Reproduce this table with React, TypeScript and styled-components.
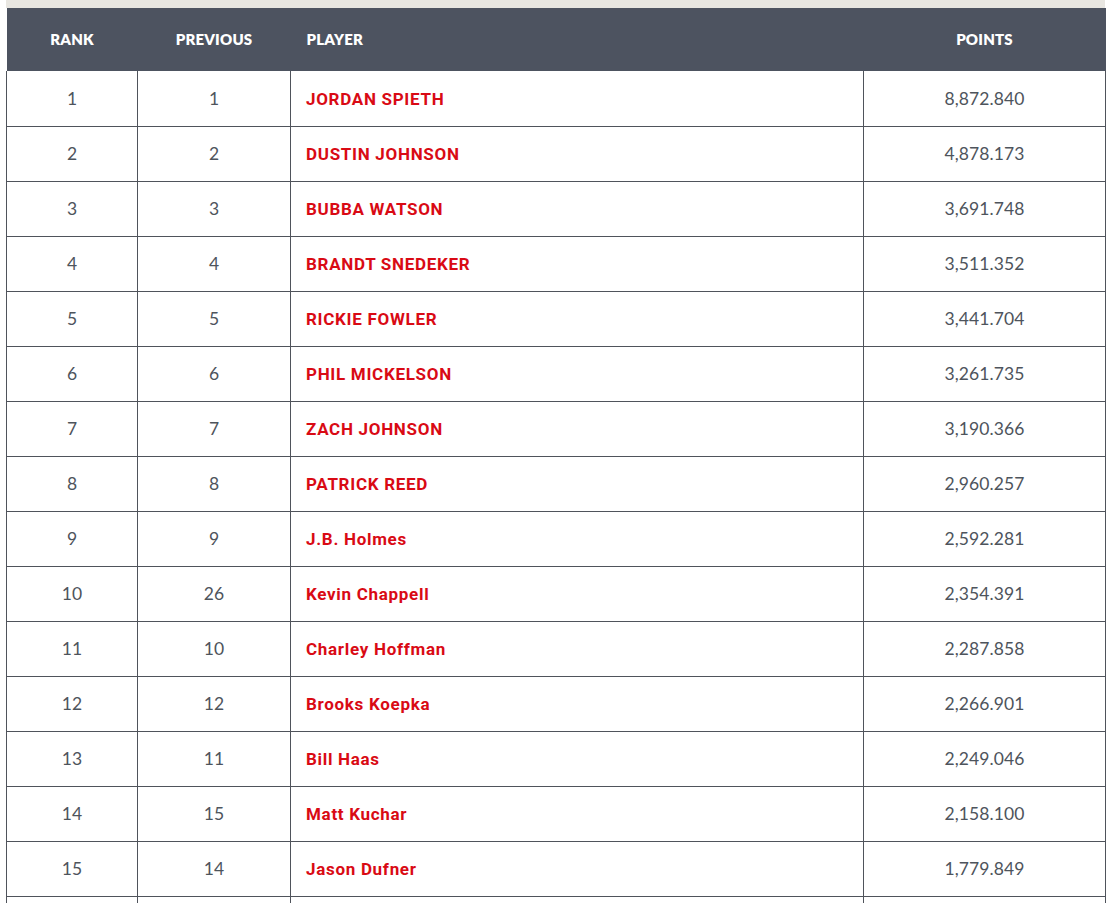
import React from "react";
import styled, { createGlobalStyle } from "styled-components";

const Global = createGlobalStyle`
  html, body { margin: 0; padding: 0; background: #ffffff; }
  body { font-family: "Lato", "Liberation Sans", sans-serif; }
`;

const Page = styled.div`
  padding: 0 8px 0 6px;
`;

const Frame = styled.div`
  width: 1099px;
  border-top: 8px solid #e8e6e1;
`;

const Table = styled.table`
  width: 1099px;
  border-collapse: collapse;
  table-layout: fixed;
`;

const HeadRow = styled.tr`
  background: #4d5360;
  height: 63px;
`;

const Th = styled.th<{ $align?: "left" | "center" }>`
  color: #ffffff;
  font-family: "Lato", "Liberation Sans", sans-serif;
  font-weight: 800;
  font-size: 15px;
  letter-spacing: 0.2px;
  text-transform: uppercase;
  text-align: ${(p) => p.$align ?? "center"};
  padding: 0 ${(p) => (p.$align === "left" ? "16px" : "0")};
  padding-bottom: 2px;
  vertical-align: middle;
`;

const Row = styled.tr`
  height: 55px;
`;

const Td = styled.td<{ $align?: "left" | "center" }>`
  border: 1px solid #4f535b;
  border-top: none;
  text-align: ${(p) => p.$align ?? "center"};
  padding: 0 ${(p) => (p.$align === "left" ? "15px" : "0")};
  color: #4e545c;
  font-family: "Lato", "Liberation Sans", sans-serif;
  font-size: 17.5px;
  font-weight: 400;
  letter-spacing: 0.1px;
  vertical-align: middle;
`;

const Name = styled.a`
  color: #d90a14;
  font-family: "Roboto", "Liberation Sans", sans-serif;
  font-weight: 700;
  font-size: 17px;
  letter-spacing: 0.7px;
  text-decoration: none;
`;

const players: [number, number, string, string][] = [
  [1, 1, "JORDAN SPIETH", "8,872.840"],
  [2, 2, "DUSTIN JOHNSON", "4,878.173"],
  [3, 3, "BUBBA WATSON", "3,691.748"],
  [4, 4, "BRANDT SNEDEKER", "3,511.352"],
  [5, 5, "RICKIE FOWLER", "3,441.704"],
  [6, 6, "PHIL MICKELSON", "3,261.735"],
  [7, 7, "ZACH JOHNSON", "3,190.366"],
  [8, 8, "PATRICK REED", "2,960.257"],
  [9, 9, "J.B. Holmes", "2,592.281"],
  [10, 26, "Kevin Chappell", "2,354.391"],
  [11, 10, "Charley Hoffman", "2,287.858"],
  [12, 12, "Brooks Koepka", "2,266.901"],
  [13, 11, "Bill Haas", "2,249.046"],
  [14, 15, "Matt Kuchar", "2,158.100"],
  [15, 14, "Jason Dufner", "1,779.849"],
  [16, 16, "Jimmy Walker", "1,702.004"],
];

export default function App() {
  return (
    <Page>
      <Global />
      <Frame>
        <Table>
          <colgroup>
            <col style={{ width: 131 }} />
            <col style={{ width: 153 }} />
            <col style={{ width: 573 }} />
            <col style={{ width: 242 }} />
          </colgroup>
          <thead>
            <HeadRow>
              <Th>Rank</Th>
              <Th>Previous</Th>
              <Th $align="left">Player</Th>
              <Th>Points</Th>
            </HeadRow>
          </thead>
          <tbody>
            {players.map(([rank, prev, name, pts]) => (
              <Row key={rank}>
                <Td>{rank}</Td>
                <Td>{prev}</Td>
                <Td $align="left">
                  <Name href="#">{name}</Name>
                </Td>
                <Td>{pts}</Td>
              </Row>
            ))}
          </tbody>
        </Table>
      </Frame>
    </Page>
  );
}
